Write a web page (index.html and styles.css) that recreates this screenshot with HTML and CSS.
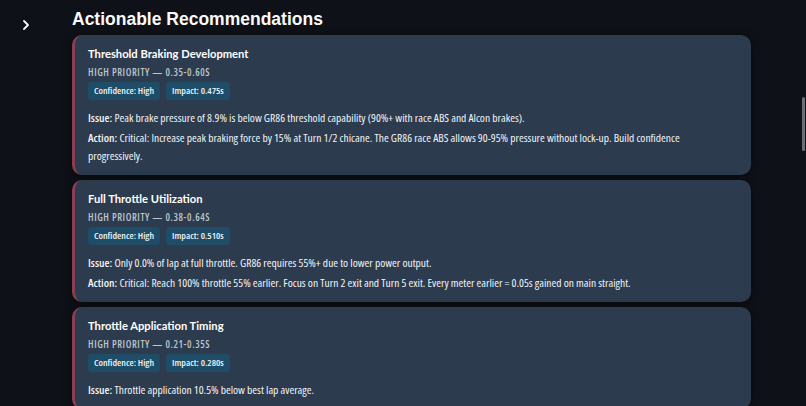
FILE: index.html
```html
<!DOCTYPE html>
<html>
<head>
<meta charset="utf-8">
<link rel="stylesheet" href="styles.css">
</head>
<body>
<div class="app">
  <aside class="side">
    <svg class="chev" width="10" height="12" viewBox="0 0 10 12"><path d="M3 2 L7 6 L3 10" fill="none" stroke="#fafafa" stroke-width="1.8" stroke-linecap="round" stroke-linejoin="round"/></svg>
  </aside>
  <main class="main">
    <h3 class="heading">Actionable Recommendations</h3>
    <div class="cards">
      <section class="card">
        <h4 class="title">Threshold Braking Development</h4>
        <div class="prio">High Priority — 0.35-0.60s</div>
        <div class="badges"><span class="badge">Confidence: High</span><span class="badge">Impact: 0.475s</span></div>
        <p class="line"><b>Issue:</b> Peak brake pressure of 8.9% is below GR86 threshold capability (90%+ with race ABS and Alcon brakes).</p>
        <p class="line"><b>Action:</b> Critical: Increase peak braking force by 15% at Turn 1/2 chicane. The GR86 race ABS allows 90-95% pressure without lock-up. Build confidence progressively.</p>
      </section>
      <section class="card">
        <h4 class="title">Full Throttle Utilization</h4>
        <div class="prio">High Priority — 0.38-0.64s</div>
        <div class="badges"><span class="badge">Confidence: High</span><span class="badge">Impact: 0.510s</span></div>
        <p class="line"><b>Issue:</b> Only 0.0% of lap at full throttle. GR86 requires 55%+ due to lower power output.</p>
        <p class="line"><b>Action:</b> Critical: Reach 100% throttle 55% earlier. Focus on Turn 2 exit and Turn 5 exit. Every meter earlier = 0.05s gained on main straight.</p>
      </section>
      <section class="card">
        <h4 class="title">Throttle Application Timing</h4>
        <div class="prio">High Priority — 0.21-0.35s</div>
        <div class="badges"><span class="badge">Confidence: High</span><span class="badge">Impact: 0.280s</span></div>
        <p class="line"><b>Issue:</b> Throttle application 10.5% below best lap average.</p>
      </section>
    </div>
  </main>
  <div class="scroll-thumb"></div>
</div>
</body>
</html>
```
FILE: styles.css
```css
html, body {
  margin: 0;
  padding: 0;
  height: 100%;
  overflow: hidden;
  background: #0e1117;
}
body {
  font-family: "Open Sans", sans-serif;
  font-stretch: 75%;
  color: #fafafa;
}
.app {
  display: flex;
  height: 406px;
  position: relative;
}
.side {
  width: 72px;
  flex: none;
  padding-top: 19px;
  padding-left: 21px;
  box-sizing: border-box;
}
.chev { display: block; }
.main {
  width: 679px;
  flex: none;
}
.heading {
  margin: 0;
  padding-top: 8px;
  height: 27px;
  font-family: "Liberation Sans", Arial, sans-serif;
  font-stretch: normal;
  font-weight: 700;
  font-size: 17.5px;
  line-height: 22px;
  color: #fafafa;
}
.cards {
  display: flex;
  flex-direction: column;
  gap: 5px;
}
.card {
  background: #2c3b4e;
  border-left: 3px solid #8b3d52;
  border-radius: 10px;
  padding: 10px 16px 10px 13px;
  box-shadow: 0 1px 8px rgba(0,0,0,0.5);
}
.title {
  margin: 0;
  font-family: Lato, "Open Sans", sans-serif;
  font-stretch: normal;
  font-size: 11.2px;
  font-weight: 700;
  line-height: 18px;
  color: #ffffff;
}
.prio {
  font-size: 10px;
  font-weight: 600;
  letter-spacing: 0.6px;
  text-transform: uppercase;
  color: #bfc5cc;
  line-height: 18px;
}
.badges {
  display: flex;
  gap: 6px;
  margin-top: 1px;
}
.badge {
  background: #1f4d67;
  border-radius: 3px;
  padding: 0 6px;
  height: 18px;
  line-height: 18px;
  font-size: 9.7px;
  font-weight: 600;
  color: #eef2f5;
}
.line {
  margin: 0;
  font-size: 11.5px;
  line-height: 18px;
  color: #f2f4f6;
}
.badges + .line { margin-top: 9px; }
.line + .line { margin-top: 2px; }
.line b { font-weight: 600; }
.scroll-thumb {
  position: absolute;
  right: 1px;
  top: 97px;
  width: 3px;
  height: 54px;
  background: #6c6f75;
  border-radius: 2px;
}
```
